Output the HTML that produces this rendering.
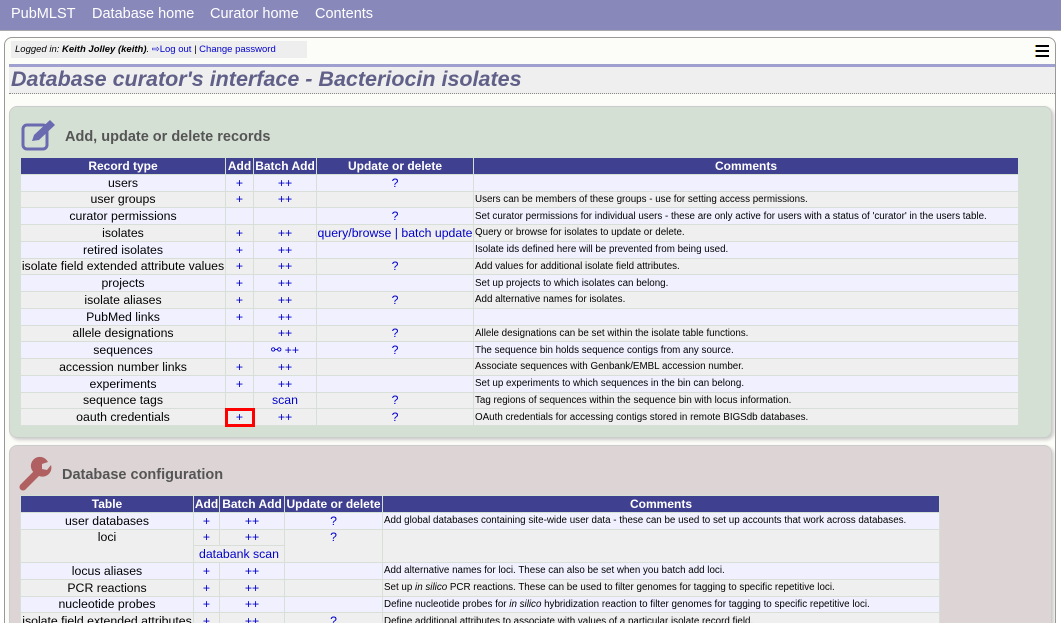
<!DOCTYPE html>
<html style="overflow:hidden;height:623px"><head><meta charset="utf-8"><style>
body{margin:0;width:1061px;height:623px;overflow:hidden;background:#fff;font-family:"Liberation Sans",Arial,sans-serif;position:relative;}
.nav{height:30px;background:#8888bb;border-bottom:1px solid #aaa;}
.nav span{color:#fff;font-size:14.5px;position:absolute;top:6px;}
.main{position:absolute;left:4px;top:37px;width:1050px;height:590px;border:1px solid #999;border-radius:8px 8px 0 0;background:#fcfdf8;overflow:hidden;}
.login{position:absolute;left:6px;top:3px;height:17px;width:292px;background:#eee;font-size:9.5px;line-height:17px;padding-left:4px;font-style:italic;}
.login a{color:#00c;font-style:normal}
.bar{position:absolute;left:4px;top:26px;width:1046px;height:26px;background:#efefef;border-top:3px solid #a0a0d0;border-bottom:1px dotted #888;}
.bar h1{margin:0;font-size:21.5px;font-style:italic;color:#606088;padding-left:2px;line-height:24px;}
.box{position:absolute;left:4px;width:1041px;border:1px solid #ccc;border-radius:8px;box-shadow:2px 2px 3px #ccc;}
.box h2{position:absolute;margin:0;font-size:14.5px;color:#555;}
table{position:absolute;left:10px;border-collapse:collapse;font-size:12.3px;}
th{background:#404090;color:#fff;font-size:12px;height:15.75px;padding:0;border:1px solid #d5e0d5;}
td{height:15.75px;padding:0;text-align:center;border:1px solid #d8dfd8;color:#000;line-height:14px;vertical-align:middle;}
td.c{text-align:left;font-size:9.8px;padding:1px 0 0 1px;height:14.75px;line-height:12px;}
td a{color:#00c;}
tr.o td{background:#f0f0ff}
tr.e td{background:#efefef}
.menu{position:absolute;right:6px;top:7px;width:14px;}
.menu div{height:2px;background:#000;margin-bottom:3px;border-left:1px solid #c80;}
</style></head><body>
<div class="nav"><span style="left:11px">PubMLST</span><span style="left:92px">Database home</span><span style="left:210px">Curator home</span><span style="left:315px">Contents</span></div>
<div class="main">
<div class="login">Logged in: <b>Keith Jolley (keith)</b>. <a>⇨Log out</a> | <a>Change password</a></div>
<div class="menu"><div></div><div></div><div></div></div>
<div class="bar"><h1>Database curator's interface - Bacteriocin isolates</h1></div>
<div class="box" style="top:68px;height:330px;background:#d5e0d5;">
<svg style="position:absolute;left:10px;top:10px" width="38" height="36" viewBox="0 0 38 36"><rect x="3" y="8" width="24" height="24" rx="4" fill="none" stroke="#6a6ab0" stroke-width="3"/><path d="M12 24 L14 18 L30 3 L35 8 L19 23 Z" fill="#6a6ab0"/></svg>
<h2 style="left:55px;top:22px">Add, update or delete records</h2>
<table style="top:50px;width:999px">
<tr><th style="width:204px">Record type</th><th style="width:27px">Add</th><th style="width:62px">Batch Add</th><th style="width:156px">Update or delete</th><th>Comments</th></tr>
<tr class="o"><td>users</td><td><a>+</a></td><td><a>++</a></td><td><a>?</a></td><td class="c"></td></tr>
<tr class="e"><td>user groups</td><td><a>+</a></td><td><a>++</a></td><td></td><td class="c">Users can be members of these groups - use for setting access permissions.</td></tr>
<tr class="o"><td>curator permissions</td><td></td><td></td><td><a>?</a></td><td class="c">Set curator permissions for individual users - these are only active for users with a status of 'curator' in the users table.</td></tr>
<tr class="e"><td>isolates</td><td><a>+</a></td><td><a>++</a></td><td><a>query/browse | batch update</a></td><td class="c">Query or browse for isolates to update or delete.</td></tr>
<tr class="o"><td>retired isolates</td><td><a>+</a></td><td><a>++</a></td><td></td><td class="c">Isolate ids defined here will be prevented from being used.</td></tr>
<tr class="e"><td>isolate field extended attribute values</td><td><a>+</a></td><td><a>++</a></td><td><a>?</a></td><td class="c">Add values for additional isolate field attributes.</td></tr>
<tr class="o"><td>projects</td><td><a>+</a></td><td><a>++</a></td><td></td><td class="c">Set up projects to which isolates can belong.</td></tr>
<tr class="e"><td>isolate aliases</td><td><a>+</a></td><td><a>++</a></td><td><a>?</a></td><td class="c">Add alternative names for isolates.</td></tr>
<tr class="o"><td>PubMed links</td><td><a>+</a></td><td><a>++</a></td><td></td><td class="c"></td></tr>
<tr class="e"><td>allele designations</td><td></td><td><a>++</a></td><td><a>?</a></td><td class="c">Allele designations can be set within the isolate table functions.</td></tr>
<tr class="o"><td>sequences</td><td></td><td><a>⚯ ++</a></td><td><a>?</a></td><td class="c">The sequence bin holds sequence contigs from any source.</td></tr>
<tr class="e"><td>accession number links</td><td><a>+</a></td><td><a>++</a></td><td></td><td class="c">Associate sequences with Genbank/EMBL accession number.</td></tr>
<tr class="o"><td>experiments</td><td><a>+</a></td><td><a>++</a></td><td></td><td class="c">Set up experiments to which sequences in the bin can belong.</td></tr>
<tr class="e"><td>sequence tags</td><td></td><td><a>scan</a></td><td><a>?</a></td><td class="c">Tag regions of sequences within the sequence bin with locus information.</td></tr>
<tr class="e"><td>oauth credentials</td><td style="outline:3px solid #f00;outline-offset:-2px"><a>+</a></td><td><a>++</a></td><td><a>?</a></td><td class="c">OAuth credentials for accessing contigs stored in remote BIGSdb databases.</td></tr>
</table>
</div>
<div class="box" style="top:407px;height:250px;background:#ddd5d5;">
<svg style="position:absolute;left:8px;top:10px" width="36" height="36" viewBox="0 0 36 36"><path d="M5 31 L20 16" stroke="#b06060" stroke-width="7" stroke-linecap="round"/><path d="M18 18 A9 9 0 1 1 30 6 L24 8 L24 13 L29 14 L33 9 A9 9 0 0 1 18 18Z" fill="#b06060"/></svg>
<h2 style="left:52px;top:21px">Database configuration</h2>
<table style="top:49px;width:920px">
<tr><th style="width:172px">Table</th><th style="width:25px">Add</th><th style="width:64px">Batch Add</th><th style="width:97px">Update or delete</th><th>Comments</th></tr>
<tr class="o"><td>user databases</td><td><a>+</a></td><td><a>++</a></td><td><a>?</a></td><td class="c">Add global databases containing site-wide user data - these can be used to set up accounts that work across databases.</td></tr>
<tr class="e"><td rowspan="2" style="vertical-align:top">loci</td><td><a>+</a></td><td><a>++</a></td><td rowspan="2" style="vertical-align:top"><a>?</a></td><td class="c" rowspan="2"></td></tr>
<tr class="e"><td colspan="2"><a>databank scan</a></td></tr>
<tr class="o"><td>locus aliases</td><td><a>+</a></td><td><a>++</a></td><td></td><td class="c">Add alternative names for loci. These can also be set when you batch add loci.</td></tr>
<tr class="e"><td>PCR reactions</td><td><a>+</a></td><td><a>++</a></td><td></td><td class="c">Set up <i>in silico</i> PCR reactions. These can be used to filter genomes for tagging to specific repetitive loci.</td></tr>
<tr class="o"><td>nucleotide probes</td><td><a>+</a></td><td><a>++</a></td><td></td><td class="c">Define nucleotide probes for <i>in silico</i> hybridization reaction to filter genomes for tagging to specific repetitive loci.</td></tr>
<tr class="e"><td>isolate field extended attributes</td><td><a>+</a></td><td><a>++</a></td><td><a>?</a></td><td class="c">Define additional attributes to associate with values of a particular isolate record field.</td></tr>
</table>
</div>
</div>
</body></html>
